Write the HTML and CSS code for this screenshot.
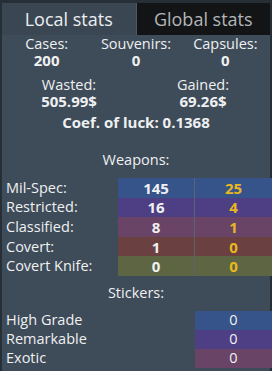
FILE: index.html
```html
<!DOCTYPE html>
<html lang="en">
<head>
  <meta charset="UTF-8" />
  <title>Case stats</title>
  <link rel="stylesheet" href="styles.css">
</head>
<body>
<div class="panel">
  <div class="tabs">
    <div class="tab active">Local stats</div>
    <div class="tab">Global stats</div>
  </div>

  <div class="content">
    <div class="trio">
      <div class="stat"><span>Cases:</span><b>200</b></div>
      <div class="stat"><span>Souvenirs:</span><b>0</b></div>
      <div class="stat"><span>Capsules:</span><b>0</b></div>
    </div>

    <div class="duo">
      <div class="stat"><span>Wasted:</span><b>505.99$</b></div>
      <div class="stat"><span>Gained:</span><b>69.26$</b></div>
    </div>

    <div class="luck">Coef. of luck: 0.1368</div>

    <div class="section-title">Weapons:</div>
    <div class="grid weapons">
      <div class="label">Mil-Spec:</div>
      <div class="cell milspec">145</div>
      <div class="cell milspec gold">25</div>
      <div class="label">Restricted:</div>
      <div class="cell restricted">16</div>
      <div class="cell restricted gold">4</div>
      <div class="label">Classified:</div>
      <div class="cell classified">8</div>
      <div class="cell classified gold">1</div>
      <div class="label">Covert:</div>
      <div class="cell covert">1</div>
      <div class="cell covert gold">0</div>
      <div class="label">Covert Knife:</div>
      <div class="cell knife">0</div>
      <div class="cell knife gold">0</div>
    </div>

    <div class="section-title stickers-title">Stickers:</div>
    <div class="grid stickers">
      <div class="label">High Grade</div>
      <div class="cell milspec thin">0</div>
      <div class="label">Remarkable</div>
      <div class="cell restricted thin">0</div>
      <div class="label">Exotic</div>
      <div class="cell classified thin">0</div>
    </div>
  </div>
</div>
</body>
</html>
```

FILE: styles.css
```css
html, body {
  margin: 0;
  padding: 0;
  background: #262e36;
  font-family: "Open Sans", "Noto Sans", sans-serif;
  color: #eef0f2;
}

.panel {
  width: 268px;
  height: 368px;
  margin: 3px 2px 0 2px;
  background: #3e4b58;
  display: flex;
  flex-direction: column;
}

.tabs {
  display: flex;
  height: 32px;
}

.tab {
  flex: 1;
  display: flex;
  align-items: center;
  justify-content: center;
  font-size: 18px;
  background: #121416;
  color: #b3b6b8;
}

.tab.active {
  background: #3a4652;
  color: #eceef0;
  border-right: 1px solid #4c5965;
}

.content {
  display: flex;
  flex-direction: column;
  font-size: 14.5px;
  line-height: 16px;
}

.stat {
  display: flex;
  flex-direction: column;
  align-items: center;
}

.stat b,
.luck,
.cell {
  font-weight: bold;
  font-size: 15px;
}

.trio {
  display: grid;
  grid-template-columns: 1fr 1fr 1fr;
  padding-top: 1px;
}

.duo {
  display: grid;
  grid-template-columns: 1fr 1fr;
  padding-top: 9px;
}

.luck {
  text-align: center;
  padding-top: 5px;
}

.section-title {
  text-align: center;
  padding: 22px 0 10px;
}

.stickers-title {
  padding-top: 9px;
}

.grid {
  display: grid;
  padding-left: 4px;
}

.weapons {
  grid-template-columns: 112px 76px 78px;
  grid-auto-rows: 19.6px;
}

.stickers {
  grid-template-columns: 189px 77px;
  grid-auto-rows: 19px;
}

.label {
  display: flex;
  align-items: center;
}

.cell {
  display: flex;
  align-items: center;
  justify-content: center;
}

.cell.thin {
  font-weight: normal;
  font-size: 14.5px;
}

.gold {
  color: #e8b820;
  border-left: 1px solid #59646f;
}

.milspec { background: #36538a; }
.restricted { background: #4e3f85; }
.classified { background: #6a4466; }
.covert { background: #6b4041; }
.knife { background: #5e6543; }
```
